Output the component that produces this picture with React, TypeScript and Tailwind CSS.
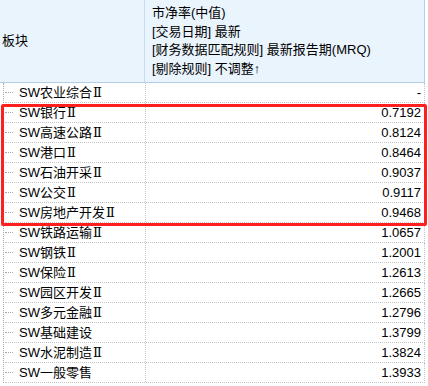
const rows: [string, string][] = [
  ['SW农业综合Ⅱ', '-'],
  ['SW银行Ⅱ', '0.7192'],
  ['SW高速公路Ⅱ', '0.8124'],
  ['SW港口Ⅱ', '0.8464'],
  ['SW石油开采Ⅱ', '0.9037'],
  ['SW公交Ⅱ', '0.9117'],
  ['SW房地产开发Ⅱ', '0.9468'],
  ['SW铁路运输Ⅱ', '1.0657'],
  ['SW钢铁Ⅱ', '1.2001'],
  ['SW保险Ⅱ', '1.2613'],
  ['SW园区开发Ⅱ', '1.2665'],
  ['SW多元金融Ⅱ', '1.2796'],
  ['SW基础建设', '1.3799'],
  ['SW水泥制造Ⅱ', '1.3824'],
  ['SW一般零售', '1.3933'],
]

// the roman numeral gets a serif face so it shows the joined top/bottom bars
function Name({ text }: { text: string }) {
  const roman = text.endsWith('Ⅱ')
  const base = roman ? text.slice(0, -1) : text
  return (
    <span className="pl-[6px] leading-none whitespace-nowrap">
      {base}
      {roman && (
        <span className="ml-[1px]" style={{ fontFamily: '"DejaVu Serif", serif' }}>
          Ⅱ
        </span>
      )}
    </span>
  )
}

export default function App() {
  return (
    <div
      className="relative w-[428px] h-[386px] bg-white text-[13px] text-black overflow-hidden"
      style={{ fontFamily: '"Liberation Sans", "Noto Sans CJK SC", sans-serif' }}
    >
      {/* header */}
      <div className="flex h-[83px] w-[425px] bg-[#eaf4fd] border-b border-r border-[#b3cdea]">
        <div className="w-[145px] flex items-center pl-[2px] border-r border-[#c6dbf1]">板块</div>
        <div className="flex-1 pl-[7px] pt-[4px] leading-[18.5px] whitespace-nowrap">
          <div>市净率(中值)</div>
          <div>[交易日期] 最新</div>
          <div>[财务数据匹配规则] 最新报告期(MRQ)</div>
          <div>
            [剔除规则] 不调整<span className="font-bold">↑</span>
          </div>
        </div>
      </div>

      {/* body */}
      <div className="ml-[3px] w-[422px] border-l border-dotted border-[#a8a8a8]">
        {rows.map(([name, value]) => (
          <div key={name} className="flex h-[20px] ml-[1px] border-b border-r border-dotted border-[#c4c4c4]">
            <div className="w-[140px] flex items-center">
              <span className="w-[8px] border-t border-dotted border-[#a8a8a8]" />
              <Name text={name} />
            </div>
            <div className="flex-1 flex items-center justify-end pr-[3px] border-l border-dotted border-[#c4c4c4]">
              {value}
            </div>
          </div>
        ))}
      </div>

      {/* highlight */}
      <div className="absolute left-[1px] top-[104px] w-[426px] h-[122px] border-[3px] border-[#ff1f1f] rounded-[2px]" />
    </div>
  )
}
